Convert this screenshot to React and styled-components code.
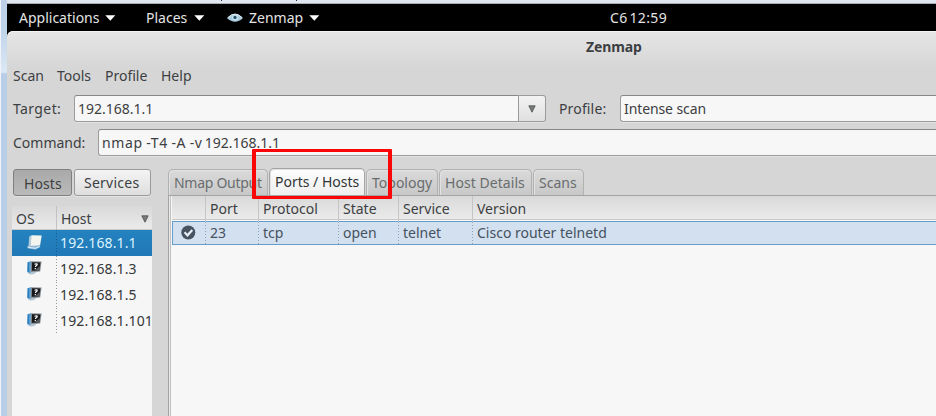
import React from 'react';
import styled, { createGlobalStyle, css } from 'styled-components';

const GlobalStyle = createGlobalStyle`
  *, *::before, *::after { box-sizing: border-box; }
  html, body { margin: 0; padding: 0; overflow: hidden; }
  body { font: 14px/20px "Noto Sans", "Open Sans", sans-serif; color: #3c4042; background: #d6d6d6; }
`;

const Screen = styled.div`
  position: relative;
  display: grid;
  grid-template-columns: 7px 1fr;
  grid-template-rows: 4px 412px;
  width: 936px;
  height: 416px;
  overflow: hidden;
`;
const HostEdge = styled.div`
  grid-row: 1 / 3;
  border-left: 1px solid #f0f4f8;
  background: linear-gradient(#bdd0e7 0 4px, #bfd3ea 30px, #dce8f4 72px, #b9cde6 74px, #b9cde6);
`;
const HostStrip = styled.div`
  background: #e1e7f1;
  border-bottom: 1px solid #a9abb0;
`;
const Desktop = styled.div`
  display: flex;
  flex-direction: column;
  background: #000;
  min-width: 0;
`;
const TopBar = styled.div`
  display: flex;
  align-items: center;
  height: 27px;
  padding-left: 12px;
  color: #e4e4e4;
  flex: none;
`;
const Text = styled.span`
  display: block;
  flex: none;
  white-space: pre;
  letter-spacing: ${p => p.$ls || 0}px;
  word-spacing: ${p => p.$ws || 0}px;
  width: ${p => (p.$w ? `${p.$w}px` : 'auto')};
`;
const BarItem = styled.div`
  display: flex;
  align-items: center;
  gap: ${p => p.$gap || 6}px;
  width: ${p => p.$w}px;
  flex: none;
`;
const AppWindow = styled.div`
  display: flex;
  flex-direction: column;
  flex: 1;
  min-height: 0;
  background: linear-gradient(#e6e6e6, #d6d6d6 36px);
  border-radius: 6px 0 0 0;
  box-shadow: inset 0 1px #f3f3f3;
`;
const TitleBar = styled.div`
  height: 33px;
  flex: none;
  padding: 6px 0 0 579px;
  font-weight: 700;
`;
const MenuBar = styled.nav`
  display: flex;
  height: 31px;
  flex: none;
  padding: 2px 0 0 6px;
`;
const FormRow = styled.div`
  display: flex;
  height: 34px;
  flex: none;
  padding-left: 6px;
  line-height: 27px;
`;
const Field = styled.div`
  display: flex;
  height: 27px;
  width: ${p => p.$w}px;
  flex: none;
  border: 1px solid #9b9c9a;
  border-top-color: #858685;
  border-right: ${p => (p.$joined ? '1px solid #9b9c9a' : 'none')};
  border-radius: 3px 0 0 3px;
  background: #f7f7f7;
  box-shadow: 0 1px #e2e2e2;
  padding-left: 3px;
  line-height: 26px;
`;
const DropButton = styled.div`
  display: grid;
  place-items: center;
  width: 27px;
  height: 27px;
  flex: none;
  border: 1px solid #9b9c9a;
  border-left: 0;
  border-radius: 0 3px 3px 0;
  background: linear-gradient(#f3f3f3, #e0e0e0);
  box-shadow: 0 1px #e2e2e2;
`;
const ProfileLabel = styled.div`
  width: 74px;
  padding-left: 13px;
  flex: none;
`;
const Content = styled.div`
  display: flex;
  flex: 1;
  min-height: 0;
  padding-top: 5px;
`;
const Sidebar = styled.aside`
  width: 161px;
  flex: none;
  display: flex;
  flex-direction: column;
  padding-top: 1px;
`;
const Toggles = styled.div`
  display: flex;
  gap: 2px;
  padding-left: 6px;
  height: 37px;
  flex: none;
`;
const Toggle = styled.div`
  width: ${p => p.$w}px;
  height: 27px;
  border: 1px solid #999b99;
  border-radius: 3px;
  background: linear-gradient(#f4f4f4, #dedede);
  box-shadow: 0 1px #e4e4e4;
  padding: 3px 0 0 ${p => p.$pl}px;
  ${p => p.$pressed && css`
    background: linear-gradient(#a9a9a9, #bababa);
    border-color: #7f807f;
    padding-top: 4px;
  `}
`;
const HostList = styled.div`
  flex: 1;
  width: 140px;
  margin-left: 5px;
  background: #f6f6f6;
  overflow: hidden;
`;
const HostHead = styled.div`
  display: flex;
  height: 24px;
  background: linear-gradient(#d9d9d9, #ebebeb);
  border-bottom: 1px solid #c9c9c9;
  line-height: 25px;
`;
const HostHeadCell = styled.div`
  display: flex;
  align-items: center;
  justify-content: space-between;
  width: ${p => p.$w}px;
  padding: 2px 3px 0 4px;
  border-right: ${p => (p.$line ? '1px solid #c2c2c2' : '0')};
`;
const HostRow = styled.div`
  display: flex;
  height: 26px;
  line-height: 25px;
  color: ${p => (p.$selected ? '#dcf3ff' : '#34383a')};
  background: ${p => (p.$selected ? 'linear-gradient(#2482c0, #2179b5)' : 'transparent')};
`;
const dots = c => `repeating-linear-gradient(${c} 0 1px, transparent 1px 3px)`;
const HostIconCell = styled.div`
  width: 45px;
  flex: none;
  padding: 4px 0 0 14px;
  line-height: 0;
  background: ${p => dots(p.$selected ? '#105b91' : '#999')} right / 1px 100% no-repeat;
`;
const HostName = styled.div`
  padding-left: 3px;
`;
const Notebook = styled.section`
  flex: 1;
  min-width: 0;
  display: flex;
  flex-direction: column;
`;
const Tabs = styled.div`
  display: flex;
  align-items: flex-end;
  height: 27px;
  flex: none;
`;
const Tab = styled.div`
  width: ${p => p.$w}px;
  height: 26px;
  margin-right: ${p => p.$mr ?? 2}px;
  flex: none;
  border: 1px solid #b0b1b0;
  border-bottom: 0;
  border-radius: 5px 5px 0 0;
  background: linear-gradient(#dadada, #c8c8c8);
  color: #696d6e;
  box-shadow: inset 1px 1px #e2e2e2;
  padding: 3px 0 0 5px;
  ${p => p.$active && css`
    height: 27px;
    background: linear-gradient(#fdfdfd, #efefef);
    border-color: #a3a4a3;
    color: #303436;
  `}
`;
const Panel = styled.div`
  flex: 1;
  border-top: 1px solid #a3a4a3;
  border-left: 1px solid #a3a4a3;
  background: #f7f7f7;
  box-shadow: inset 1px 0 #e8e8e8, inset 2px 0 #c2c2c2;
  padding-left: 3px;
`;
const PortRow = styled.div`
  display: grid;
  grid-template-columns: 34px 53px 80px 60px 74px 1fr;
`;
const PortHead = styled(PortRow)`
  height: 24px;
  border-bottom: 1px solid #c9c9c9;
  background: linear-gradient(#d9d9d9, #ebebeb);
  line-height: 26px;
`;
const PortLine = styled(PortRow)`
  height: 24px;
  margin-top: 1px;
  border: 1px solid #649fca;
  border-right: 0;
  background: #d3e0ef;
  color: #45525f;
  grid-template-columns: 33px 53px 80px 60px 74px 1fr;
  line-height: 22px;
`;
const HeadCell = styled.div`
  padding-left: 4px;
  border-right: 1px solid #c5c5c5;
  &:last-child { border: 0; }
`;
const DataCell = styled.div`
  padding-left: 4px;
  background: ${dots('#8fa3b5')} right / 1px 100% no-repeat;
  &:last-child { background: none; }
`;
const StatusCell = styled(DataCell)`
  padding: 3px 0 0 8px;
  line-height: 0;
`;
const Highlight = styled.div`
  position: absolute;
  left: 252px;
  top: 149px;
  width: 140px;
  height: 50px;
  border: 4px solid #fb0606;
  border-width: 3px 4px;
  border-radius: 1px;
`;
const StripMark = styled.i`
  position: absolute;
  top: 0;
  left: ${p => p.$x}px;
  width: 1px;
  height: 1px;
  background: #222c44;
`;

const Caret = () => (
  <svg width="11" height="6" viewBox="0 0 11 6"><path d="M.3.3h10L5.3 5.8z" fill="#fff" /></svg>
);
const Arrow = () => (
  <svg width="8" height="8" viewBox="0 0 8 8"><path d="M.8.8h6.4L4 7.2z" fill="#777a78" stroke="#4c504e" strokeWidth=".8" /></svg>
);
const Eye = () => (
  <svg width="16" height="10" viewBox="0 0 16 10">
    <path d="M0 5Q8-3.5 16 5Q8 12.5 0 5z" fill="#a9cbdc" />
    <path d="M1 4.7Q8-2.5 15 4.7" fill="none" stroke="#dceaf0" />
    <circle cx="8" cy="4.6" r="3" fill="#c5e0ec" />
    <circle cx="8" cy="4.4" r="1.6" fill="#24506b" />
  </svg>
);
const RouterIcon = () => (
  <svg width="18" height="18" viewBox="0 0 18 18">
    <path d="M1 12.5l4-2 8 1 1.5 1.5-5 2.5-7.5-1z" fill="#8fb9d8" />
    <path d="M3.2 2.5l2.3-1.3L4.7 12l-2.2.8z" fill="#b3cbda" />
    <path d="M5.4 1.2l10.3.3-1.6 10-9.4.2z" fill="#f5f5ef" />
    <path d="M2 13.3l7.5 1 4-1.8" stroke="#e4f1f8" fill="none" />
  </svg>
);
const UnknownIcon = () => (
  <svg width="18" height="18" viewBox="0 0 18 18">
    <path d="M1 12.5l4-1.5 7 0-4.5 3.3-3.5.3z" fill="#b3c4d2" />
    <path d="M1.5 2.3l3.5-1L4.5 13l-3.3-1.2z" fill="#287fbe" />
    <path d="M3.5 2l1-.3v10.6l-1 .4z" fill="#82bce4" />
    <path d="M5 1.2l10.6.4-1.4 9.8-9.5.6z" fill="#858c92" />
    <path d="M6 2.3l8.4.3-1.1 7.8-7.5.4z" fill="#17191b" />
    <path d="M10 9.5l3.8-3.5-.6 4.2-3 .2z" fill="#5b5f64" />
    <path d="M8.5 4.3q3.2-1.2 2.6.7l-1.5 1.2v.8M9.3 8v1.2" stroke="#fff" strokeWidth="1.2" fill="none" />
  </svg>
);
const CheckIcon = () => (
  <svg width="15" height="15" viewBox="0 0 15 15">
    <circle cx="7.3" cy="7.5" r="7" fill="#475360" />
    <path d="M3.5 7.3l3 3L11.3 5" fill="none" stroke="#e7eef6" strokeWidth="2.2" />
  </svg>
);

const menus = [['Scan', 44], ['Tools', 48], ['Profile', 56], ['Help', 40]];
const hosts = ['192.168.1.1', '192.168.1.3', '192.168.1.5', '192.168.1.101'];
const tabs = [
  { label: 'Nmap Output', w: 100, mr: 1, ls: -0.28 },
  { label: 'Ports / Hosts', w: 96, mr: 1, active: true },
  { label: 'Topology', w: 72, mr: 1 },
  { label: 'Host Details', w: 93, mr: 1, ls: 0.05 },
  { label: 'Scans', w: 51 },
];

export default function App() {
  return (
    <>
      <GlobalStyle />
      <Screen>
        <HostEdge />
        <HostStrip />
        <Desktop>
          <TopBar>
            <BarItem $w={127}><Text $w={80}>Applications</Text><Caret /></BarItem>
            <BarItem $w={81}><Text $w={42}>Places</Text><Caret /></BarItem>
            <BarItem $w={383}><Eye /><Text $w={54}>Zenmap</Text><Caret /></BarItem>
            <Text $ls={0.4} $ws={-2.3}>C6 12:59</Text>
          </TopBar>
          <AppWindow>
            <TitleBar><Text $ls={-0.1}>Zenmap</Text></TitleBar>
            <MenuBar>{menus.map(([t, w]) => <Text key={t} $w={w}>{t}</Text>)}</MenuBar>
            <FormRow>
              <Text $w={61} $ls={0.4}>Target:</Text>
              <Field $w={445} $joined><Text>192.168.1.1</Text></Field>
              <DropButton><Arrow /></DropButton>
              <ProfileLabel><Text $ls={0.15}>Profile:</Text></ProfileLabel>
              <Field $w={320}><Text $ls={-0.1}>Intense scan</Text></Field>
            </FormRow>
            <FormRow>
              <Text $w={85}>Command:</Text>
              <Field $w={860}>
                <Text $ls={0.6} $ws={-0.6}>nmap -T4 -A -v</Text>
                <Text $ws={-1.5}> 192.168.1.1</Text>
              </Field>
            </FormRow>
            <Content>
              <Sidebar>
                <Toggles>
                  <Toggle $w={59} $pl={10} $pressed><Text $ls={0.1}>Hosts</Text></Toggle>
                  <Toggle $w={77} $pl={9}><Text $ls={0.25}>Services</Text></Toggle>
                </Toggles>
                <HostList>
                  <HostHead>
                    <HostHeadCell $w={45} $line><Text>OS</Text></HostHeadCell>
                    <HostHeadCell $w={95}><Text>Host</Text><Arrow /></HostHeadCell>
                  </HostHead>
                  {hosts.map((h, i) => (
                    <HostRow key={h} $selected={i === 0}>
                      <HostIconCell $selected={i === 0}>{i === 0 ? <RouterIcon /> : <UnknownIcon />}</HostIconCell>
                      <HostName><Text $ls={0.12}>{h}</Text></HostName>
                    </HostRow>
                  ))}
                </HostList>
              </Sidebar>
              <Notebook>
                <Tabs>
                  {tabs.map(t => (
                    <Tab key={t.label} $w={t.w} $mr={t.mr} $active={t.active}><Text $ls={t.ls}>{t.label}</Text></Tab>
                  ))}
                </Tabs>
                <Panel>
                  <PortHead>
                    {['', 'Port', 'Protocol', 'State', 'Service', 'Version'].map(t => (
                      <HeadCell key={t}><Text>{t}</Text></HeadCell>
                    ))}
                  </PortHead>
                  <PortLine>
                    <StatusCell><CheckIcon /></StatusCell>
                    {['23', 'tcp', 'open', 'telnet', 'Cisco router telnetd'].map(t => (
                      <DataCell key={t}><Text>{t}</Text></DataCell>
                    ))}
                  </PortLine>
                </Panel>
              </Notebook>
            </Content>
          </AppWindow>
        </Desktop>
        <StripMark $x={221} />
        <StripMark $x={296} />
        <Highlight />
      </Screen>
    </>
  );
}
